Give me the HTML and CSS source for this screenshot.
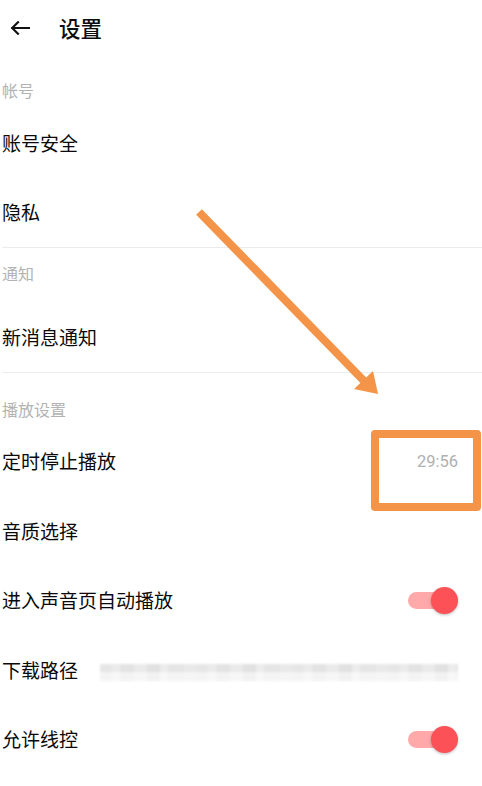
FILE: index.html
```html
<!DOCTYPE html>
<html lang="zh-CN">
<head>
<meta charset="utf-8">
<title>设置</title>
<link rel="stylesheet" href="styles.css">
</head>
<body>
<div class="page">
  <header class="topbar">
    <svg class="back" width="20" height="14" viewBox="0 0 20 14" aria-hidden="true">
      <path d="M19 7H2.2M8 1.2L2.2 7L8 12.8" fill="none" stroke="#111" stroke-width="2.1" stroke-linecap="square" stroke-linejoin="miter"/>
    </svg>
    <h1 class="title">设置</h1>
  </header>

  <section class="group">
    <div class="group-head head-a">帐号</div>
    <div class="row"><span class="row-label">账号安全</span></div>
    <div class="row"><span class="row-label">隐私</span></div>
  </section>
  <div class="divider"></div>

  <section class="group">
    <div class="group-head head-b">通知</div>
    <div class="row"><span class="row-label">新消息通知</span></div>
  </section>
  <div class="divider"></div>

  <section class="group">
    <div class="group-head head-a">播放设置</div>
    <div class="row"><span class="row-label">定时停止播放</span><span class="row-value">29:56</span></div>
    <div class="row"><span class="row-label">音质选择</span></div>
    <div class="row"><span class="row-label">进入声音页自动播放</span><span class="switch on"><span class="knob"></span></span></div>
    <div class="row"><span class="row-label">下载路径</span><span class="path-blur" aria-hidden="true"></span></div>
    <div class="row"><span class="row-label">允许线控</span><span class="switch on"><span class="knob"></span></span></div>
  </section>
</div>

<div class="mark-box" aria-hidden="true"></div>
<svg class="mark-arrow" width="482" height="786" viewBox="0 0 482 786" aria-hidden="true">
  <line x1="199" y1="212" x2="366" y2="383" stroke="#f39449" stroke-width="8"/>
  <polygon points="378,394 354,389 373,371" fill="#f39449"/>
</svg>
</body>
</html>
```

FILE: styles.css
```css
html, body {
  margin: 0;
  padding: 0;
  background: #ffffff;
}

body {
  position: relative;
  width: 482px;
  height: 786px;
  overflow: hidden;
  font-family: "Noto Sans CJK SC", "Noto Sans", Roboto, sans-serif;
  color: #0d0d0d;
}

.page {
  padding-left: 2px;
}

.topbar {
  height: 54px;
  display: flex;
  align-items: center;
  padding-left: 8px;
  padding-top: 1px;
  box-sizing: border-box;
  gap: 29px;
}

.back {
  display: block;
  flex: none;
}

.title {
  margin: 0;
  font-size: 21.5px;
  font-weight: 500;
  line-height: 1;
  color: #0d0d0d;
}

.group-head {
  height: 54px;
  box-sizing: border-box;
  font-size: 16px;
  line-height: 20px;
  color: #b3b3b3;
}

.head-a {
  padding-top: 26px;
}

.head-b {
  padding-top: 15px;
}

.row {
  height: 69.5px;
  display: flex;
  align-items: center;
  justify-content: space-between;
  padding-right: 24px;
}

.row-label {
  font-size: 19px;
  line-height: 24px;
  color: #0a0a0a;
  white-space: nowrap;
}

.row-value {
  font-family: Roboto, "Noto Sans", sans-serif;
  font-size: 16.5px;
  color: #b0b0b0;
}

.divider {
  height: 1px;
  background: #ececec;
}

.switch {
  position: relative;
  width: 50px;
  height: 27px;
  flex: none;
}

.switch::before {
  content: "";
  position: absolute;
  left: 0;
  top: 5px;
  width: 42px;
  height: 17px;
  border-radius: 9px;
  background: #ffa9ab;
}

.knob {
  position: absolute;
  right: 0;
  top: 0;
  width: 27px;
  height: 27px;
  border-radius: 50%;
  background: #fb5157;
  box-shadow: 0 1px 3px rgba(0, 0, 0, 0.28);
}

.path-blur {
  flex: 1;
  height: 17px;
  margin-left: 22px;
  margin-top: 5px;
  background:
    linear-gradient(to bottom, rgba(0, 0, 0, 0.035) 0 50%, rgba(255, 255, 255, 0.4) 50% 100%),
    repeating-linear-gradient(90deg,
      #ececec 0 12px, #f2f2f2 12px 20px, #e9e9e9 20px 34px, #f0f0f0 34px 47px,
      #e6e6e6 47px 60px, #f3f3f3 60px 68px, #ebebeb 68px 84px, #efefef 84px 96px);
  filter: blur(0.8px);
  opacity: 0.9;
}

.mark-box {
  position: absolute;
  left: 371px;
  top: 430px;
  width: 110px;
  height: 81px;
  box-sizing: border-box;
  border: 8px solid #f39449;
  border-radius: 4px;
}

.mark-arrow {
  position: absolute;
  left: 0;
  top: 0;
  pointer-events: none;
}
```
